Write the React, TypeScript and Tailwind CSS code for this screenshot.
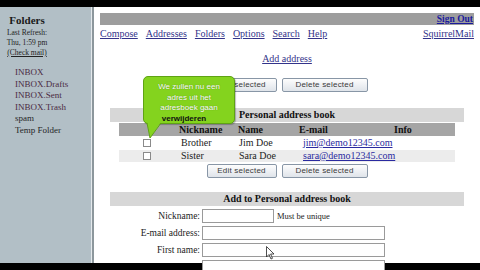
const serif = "font-['Liberation_Serif','Times_New_Roman',serif]"
const sans = "font-['Liberation_Sans',Arial,sans-serif]"

function Btn({ label, w }: { label: string; w: string }) {
  return (
    <div
      className={`${sans} ${w} h-[14px] rounded-[2px] border border-[#8896a6] bg-gradient-to-b from-[#fdfdfd] to-[#dfe4ea] text-[8px] leading-[12px] text-[#3a3a3a] text-center tracking-[0.2px]`}
    >
      {label}
    </div>
  )
}

function ButtonRow() {
  return (
    <div className="flex justify-center gap-[5px]">
      <Btn label="Edit selected" w="w-[70px]" />
      <Btn label="Delete selected" w="w-[86px]" />
    </div>
  )
}

function Check() {
  return <div className="w-[8px] h-[8px] border border-[#8a8a8a] bg-white" />
}

const rows = [
  { nick: "Brother", name: "Jim Doe", mail: "jim@demo12345.com", bg: "bg-white" },
  { nick: "Sister", name: "Sara Doe", mail: "sara@demo12345.com", bg: "bg-[#ececec]" },
]

export default function App() {
  const folders = [
    { name: "INBOX", c: "text-[#4a2a42]" },
    { name: "INBOX.Drafts", c: "text-[#4a2a42]" },
    { name: "INBOX.Sent", c: "text-[#4a2a42]" },
    { name: "INBOX.Trash", c: "text-[#4a2a42]" },
    { name: "spam", c: "text-[#262626]" },
    { name: "Temp Folder", c: "text-[#262626]" },
  ]
  const nav = ["Compose", "Addresses", "Folders", "Options", "Search", "Help"]

  return (
    <div className={`relative w-[480px] h-[270px] overflow-hidden bg-black ${serif}`}>
      <div className="h-[7px]" />
      <div className="flex h-[256px] bg-white">
        {/* Sidebar */}
        <div className="w-[91px] bg-[#b2bfc6] text-[#222]">
          <div className="w-[44px] ml-[5px] pt-[7px] text-center whitespace-nowrap overflow-hidden">
            <div className="text-[11px] font-bold leading-[13px] text-[#1a1a1a]">Folders</div>
            <div className="text-[7.5px] leading-[10px] mt-[1px]">Last Refresh:</div>
            <div className="text-[7.5px] leading-[10px]">Thu, 1:59 pm</div>
            <div className="text-[7.5px] leading-[10px] underline">(Check mail)</div>
          </div>
          <div className="pl-[15px] pt-[9px]">
            {folders.map((f) => (
              <div key={f.name} className={`text-[9px] leading-[11.5px] whitespace-nowrap ${f.c}`}>
                {f.name}
              </div>
            ))}
          </div>
        </div>
        <div className="w-px bg-[#e4e9ec]" />
        <div className="w-[2px] bg-[#8c979c]" />

        {/* Main */}
        <div className="flex-1 flex flex-col pl-[6px] pr-[6px] pt-[6px]">
          <div className="h-[13px] bg-[#9d9d9d] flex justify-end items-center pr-[1px]">
            <span className="text-[9.5px] font-bold text-[#1a1a9c] underline leading-[12px]">Sign Out</span>
          </div>
          <div className="mt-[3px] h-[12px] flex items-center text-[10px] leading-[12px] text-[#33338a]">
            <div className="flex gap-[8px]">
              {nav.map((n) => (
                <span key={n} className="underline">{n}</span>
              ))}
            </div>
            <span className="ml-auto underline">SquirrelMail</span>
          </div>
          <div className="mt-[13px] h-[12px] text-center text-[10px] leading-[12px] text-[#33338a]">
            <span className="underline">Add address</span>
          </div>
          <div className="mt-[13px]">
            <ButtonRow />
          </div>

          <div className="mt-[16px] w-[354px] mx-auto">
            <div className="h-[14px] bg-[#d7d7d7] text-center text-[10px] font-bold leading-[14px] text-[#111]">
              Personal address book
            </div>
            <div className="w-[336px] mx-auto mt-[1px] flex flex-col gap-[1px]">
              <div className="grid grid-cols-[50px_62px_62px_95px_67px] h-[13px] bg-[#a5a5a5] text-[10px] font-bold leading-[13px] text-[#111]">
                <div />
                <div className="pl-[10px]">Nickname</div>
                <div className="pl-[7px]">Name</div>
                <div className="pl-[6px]">E-mail</div>
                <div className="pl-[6px]">Info</div>
              </div>
              {rows.map((r) => (
                <div
                  key={r.nick}
                  className={`grid grid-cols-[50px_62px_62px_95px_67px] h-[12px] ${r.bg} text-[10px] leading-[12px] text-[#222]`}
                >
                  <div className="pl-[24px] flex items-center">
                    <Check />
                  </div>
                  <div className="pl-[12px]">{r.nick}</div>
                  <div className="pl-[8px]">{r.name}</div>
                  <div className="pl-[10px] text-[#2a2aa0] underline whitespace-nowrap">{r.mail}</div>
                  <div />
                </div>
              ))}
            </div>
          </div>
          <div className="mt-[2px]">
            <ButtonRow />
          </div>

          <div className="mt-[14px] w-[354px] mx-auto h-[14px] bg-[#d7d7d7] text-center text-[10px] font-bold leading-[14px] text-[#111]">
            Add to Personal address book
          </div>
          <div className="mt-[3px] grid grid-cols-[100px_auto] gap-y-[3px] gap-x-[2px] text-[9.5px] text-[#222] items-center">
            <div className="text-right leading-[14px]">Nickname:</div>
            <div className="flex items-center gap-[3px]">
              <div className="w-[72px] h-[14px] border border-[#9a9a9a] bg-white" />
              <span className="text-[8.5px]">Must be unique</span>
            </div>
            <div className="text-right leading-[14px]">E-mail address:</div>
            <div className="w-[183px] h-[14px] border border-[#9a9a9a] bg-white" />
            <div className="text-right leading-[14px]">First name:</div>
            <div className="w-[183px] h-[14px] border border-[#9a9a9a] bg-white" />
            <div />
            <div className="w-[183px] h-[14px] border border-[#9a9a9a] bg-white" />
          </div>
        </div>
      </div>
      <div className="h-[7px]" />

      {/* Tooltip */}
      <div className="absolute left-[143px] top-[76px] w-[92px] h-[48px] rounded-[5px] border border-[#5fa314] bg-[#84d31e] shadow-[1px_1px_1px_rgba(0,0,0,0.25)]">
        <div className={`${sans} pt-[5px] text-center text-[8px] leading-[10.5px] text-white [text-shadow:0_0_1px_rgba(40,80,0,0.6)]`}>
          <div>We zullen nu een</div>
          <div>adres uit het</div>
          <div>adresboek gaan</div>
          <div className="font-bold text-[#111] [text-shadow:none] pr-[10px]">verwijderen</div>
        </div>
      </div>
      <svg className="absolute left-[146px] top-[122px]" width="18" height="18" viewBox="0 0 18 18">
        <path d="M1 0 L4 16 L15 0 Z" fill="#84d31e" />
        <path d="M1 1 L4 16 L15 1" fill="none" stroke="#5fa314" strokeWidth="1" />
      </svg>

      {/* Mouse cursor */}
      <svg className="absolute left-[266px] top-[246px]" width="9" height="14" viewBox="0 0 9 14">
        <path d="M0.5 0.5 L0.5 11 L3 8.5 L5 13 L6.5 12.3 L4.6 8 L8 8 Z" fill="white" stroke="#222" strokeWidth="0.8" />
      </svg>
    </div>
  )
}
